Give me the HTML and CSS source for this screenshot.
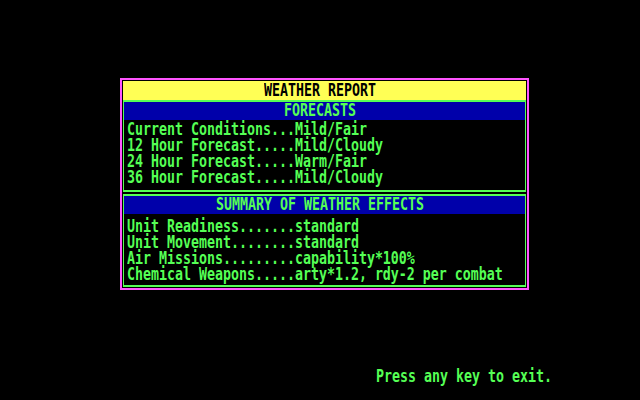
FILE: index.html
```html
<!DOCTYPE html>
<html>
<head>
<meta charset="utf-8">
<link rel="stylesheet" href="styles.css">
</head>
<body>
<div class="screen">
  <div class="panel">
    <div class="title"><span class="txt">WEATHER REPORT</span></div>
    <div class="box box-top">
      <div class="band"><span class="txt">FORECASTS</span></div>
      <div class="rows">
        <div class="row"><span class="txt">Current Conditions...Mild/Fair</span></div>
        <div class="row"><span class="txt">12 Hour Forecast.....Mild/Cloudy</span></div>
        <div class="row"><span class="txt">24 Hour Forecast.....Warm/Fair</span></div>
        <div class="row"><span class="txt">36 Hour Forecast.....Mild/Cloudy</span></div>
      </div>
    </div>
    <div class="box box-bottom">
      <div class="band"><span class="txt">SUMMARY OF WEATHER EFFECTS</span></div>
      <div class="rows">
        <div class="row"><span class="txt">Unit Readiness.......standard</span></div>
        <div class="row"><span class="txt">Unit Movement........standard</span></div>
        <div class="row"><span class="txt">Air Missions.........capability*100%</span></div>
        <div class="row"><span class="txt">Chemical Weapons.....arty*1.2, rdy-2 per combat</span></div>
      </div>
    </div>
  </div>
  <div class="prompt"><span class="txt">Press any key to exit.</span></div>
</div>
</body>
</html>
```
FILE: styles.css
```css
html, body {
  margin: 0;
  padding: 0;
  background: #000;
}
.screen {
  width: 640px;
  height: 400px;
  background: #000;
  font-family: "DejaVu Sans Mono", "Liberation Mono", monospace;
  font-weight: bold;
  font-size: 13.29px;
  color: #55ff55;
  overflow: hidden;
  display: flex;
  flex-direction: column;
}
.txt {
  display: inline-block;
  line-height: 12px;
  transform: scaleY(1.3);
  white-space: pre;
  vertical-align: middle;
}
.panel {
  margin: 78px 0 0 120px;
  width: 403px;
  border: 2px solid #ff55ff;
  padding: 1px;
  display: flex;
  flex-direction: column;
}
.title {
  background: #ffff55;
  color: #000;
  height: 19px;
  line-height: 19px;
  text-align: center;
  padding-right: 9px;
}
.box {
  border: 2px solid #55ff55;
  border-left-width: 1px;
  border-right-width: 1px;
}
.box-bottom {
  margin-top: 2px;
}
.band {
  background: #0000aa;
  height: 18px;
  line-height: 18px;
  text-align: center;
  padding-right: 9px;
}
.rows {
  padding: 2px 0 4px 3px;
}
.box-bottom .rows {
  padding: 5px 0 2px 3px;
}
.row {
  height: 16px;
  line-height: 16px;
}
.prompt {
  margin: 79px 0 0 376px;
  height: 16px;
  line-height: 16px;
}
```
